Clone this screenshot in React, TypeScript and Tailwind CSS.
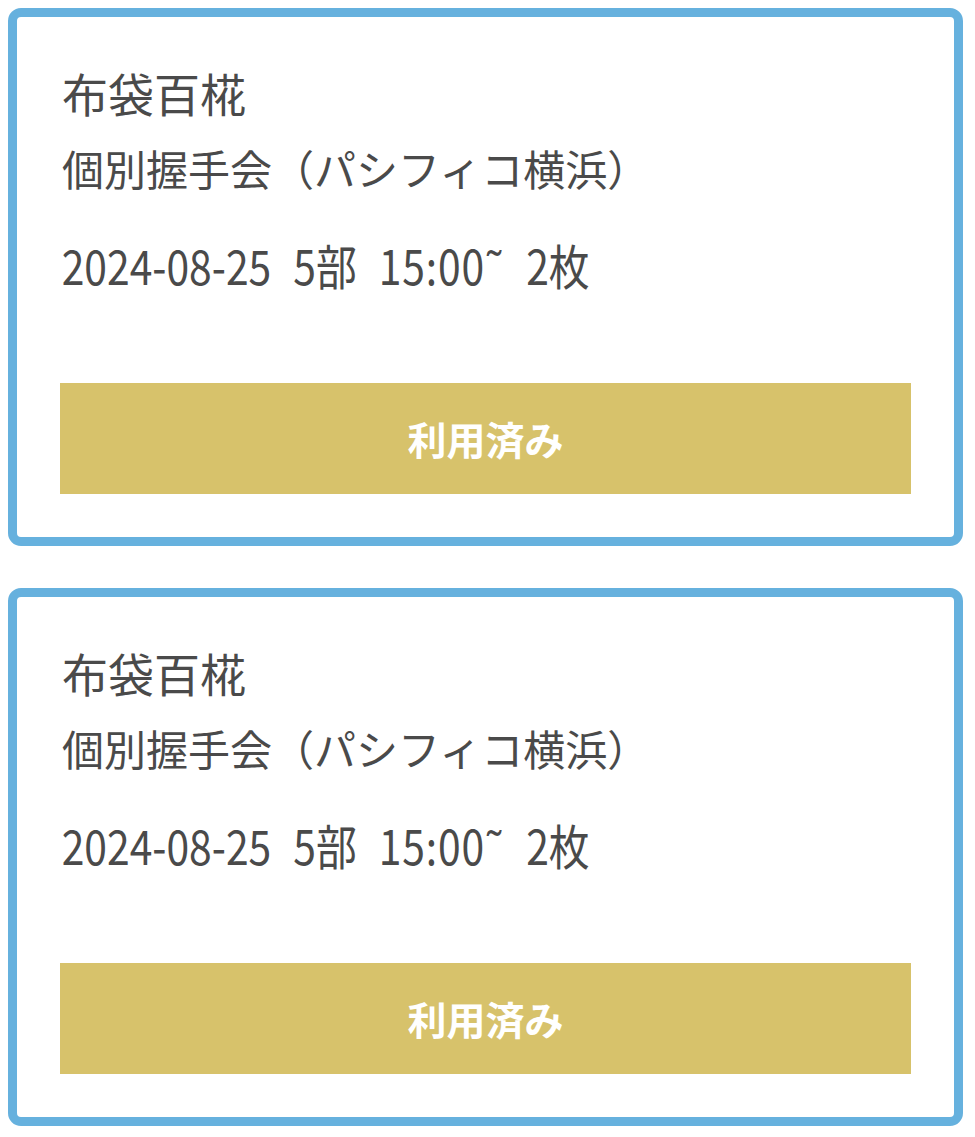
const tickets = [
  { id: 1, name: '布袋百椛', event: '個別握手会（パシフィコ横浜）', date: '2024-08-25', part: '5部', time: '15:00\u02dc', count: '2枚' },
  { id: 2, name: '布袋百椛', event: '個別握手会（パシフィコ横浜）', date: '2024-08-25', part: '5部', time: '15:00\u02dc', count: '2枚' },
];

export default function App() {
  return (
    <div className="min-h-[1137px] bg-white pt-2 pl-2 pr-3 flex flex-col gap-[42px] font-['Noto_Sans_CJK_JP','Noto_Sans',sans-serif]">
      {tickets.map(t => (
        <div
          key={t.id}
          className="w-[955px] border-[9px] border-[#66b1de] rounded-[13px] bg-white px-[43px] pt-[45px] pb-[43px] text-[#4a4a4a]"
        >
          {/* Member */}
          <p className="text-[46px] leading-[60px] pl-[2px]">{t.name}</p>
          {/* Event */}
          <p className="mt-[16px] text-[42px] leading-[60px] pl-[2px]">{t.event}</p>
          {/* Date / part / time / count */}
          <div className="mt-[36px] flex gap-[26px] text-[48px] leading-[60px] pl-[2px] scale-x-[0.85] origin-left whitespace-nowrap">
            <span>{t.date}</span>
            <span>{t.part}</span>
            <span className="tracking-[1px]">{t.time}</span>
            <span>{t.count}</span>
          </div>

          <button className="mt-[89px] w-full h-[111px] bg-[#d7c26b] text-white text-[39px] font-bold flex items-center justify-center">
            利用済み
          </button>
        </div>
      ))}
    </div>
  );
}
